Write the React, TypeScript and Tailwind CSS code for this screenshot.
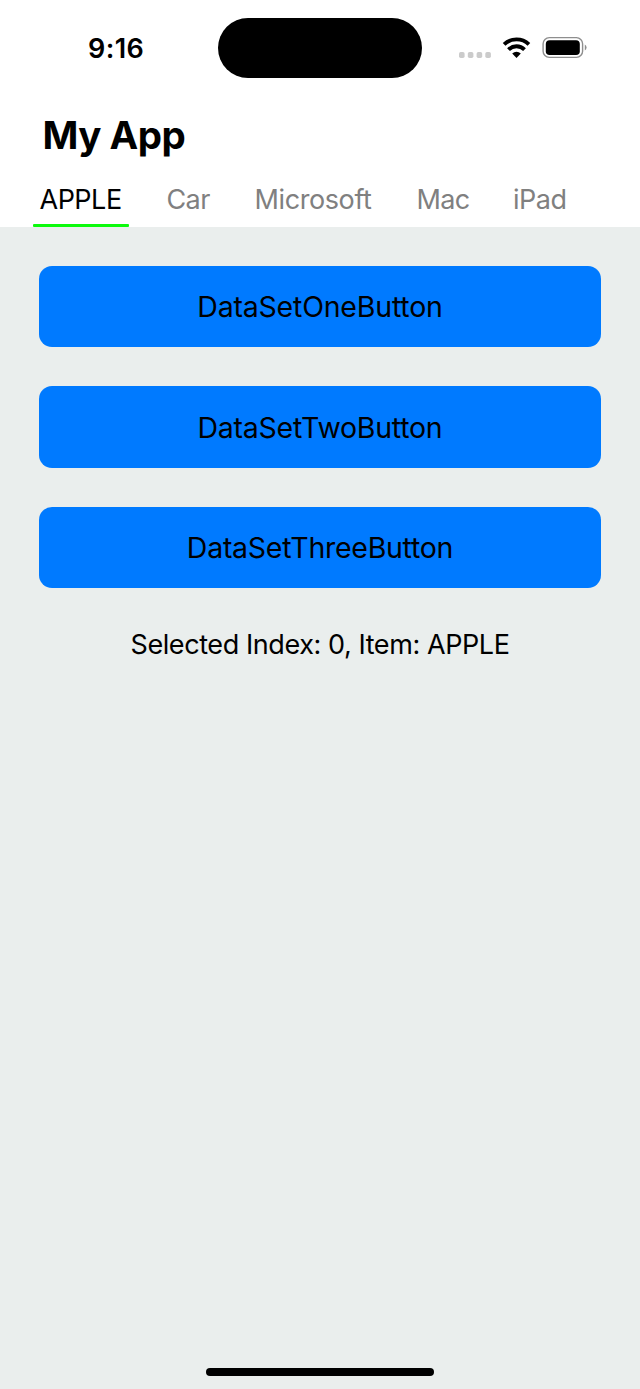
import { useState } from "react";

const tabs = [
  { label: "APPLE", width: "w-[127px]", tracking: "tracking-[-0.5px]" },
  { label: "Car", width: "w-[88px]", tracking: "tracking-[-0.6px]" },
  { label: "Microsoft", width: "w-[162px]", tracking: "tracking-[-0.4px]" },
  { label: "Mac", width: "w-[96.5px]", tracking: "tracking-[-0.7px]" },
  { label: "iPad", width: "w-[60px]", tracking: "tracking-[-0.5px]" },
];

const buttons = [
  { label: "DataSetOneButton", tracking: "tracking-[-0.2px]" },
  { label: "DataSetTwoButton", tracking: "tracking-[-0.25px]" },
  { label: "DataSetThreeButton", tracking: "tracking-[-0.27px]" },
];

function StatusBar() {
  return (
    <div className="flex h-[96px] shrink-0 items-start">
      <div className="w-[218px] pt-[32.5px] pl-[88px] text-[27px] leading-[32px] font-semibold tracking-[0.4px]">
        9:16
      </div>
      <div className="mt-[18px] h-[60px] w-[204px] rounded-full bg-black" />
      <svg className="mt-[30px] ml-[28px] h-[36px] w-[150px]" viewBox="450 30 150 36" fill="none">
        <g fill="#cbcbcb">
          <rect x="459" y="52" width="5.6" height="6" rx="1.7" />
          <rect x="467.8" y="52" width="5.6" height="6" rx="1.7" />
          <rect x="476.6" y="52" width="5.6" height="6" rx="1.7" />
          <rect x="485.3" y="52" width="5.6" height="6" rx="1.7" />
        </g>
        <g stroke="#000" strokeWidth="3.9">
          <path d="M504.1 44.3a18 18 0 0 1 24.8 0" />
          <path d="M508.5 49.6a11.3 11.3 0 0 1 16 0" />
        </g>
        <path d="M512.2 53.5a6.2 6.2 0 0 1 8.6 0L516.5 57.9Z" fill="#000" />
        <rect x="543.1" y="37.6" width="39.5" height="19.8" rx="6.2" stroke="#8e8e8e" strokeWidth="1.4" />
        <rect x="545.8" y="40.2" width="34" height="14.8" rx="3.8" fill="#000" />
        <path d="M584.8 44.5a3.4 3.4 0 0 1 0 6Z" fill="#8e8e8e" />
      </svg>
    </div>
  );
}

export default function App() {
  const [selected, setSelected] = useState(0);

  return (
    <div className="flex h-[1389px] w-[640px] flex-col overflow-hidden bg-[#eaeeed] font-['Inter',sans-serif] text-black">
      <header className="flex h-[227px] shrink-0 flex-col bg-white">
        <StatusBar />
        <h1 className="mt-[15px] ml-[42.5px] h-[62px] text-[38.5px] leading-[48px] font-bold tracking-[-0.5px]">
          My App
        </h1>
        <nav className="flex h-[54px] pl-[39.5px]">
          {tabs.map((tab, index) => (
            <button
              key={tab.label}
              onClick={() => setSelected(index)}
              className={`flex shrink-0 items-start whitespace-nowrap text-[27px] leading-[54px] ${tab.width} ${tab.tracking} ${
                index === selected ? "text-black" : "text-[#808080]"
              }`}
            >
              <span className="relative block h-[54px]">
                {tab.label}
                {index === selected && (
                  <span className="absolute -right-[7px] bottom-0 -left-[6.5px] h-[3.5px] rounded-[1px] bg-[#0cfa0c]" />
                )}
              </span>
            </button>
          ))}
        </nav>
      </header>
      <main className="flex flex-1 flex-col px-[39px] pt-[39px]">
        <div className="flex flex-col gap-[39.2px]">
          {buttons.map((button) => (
            <button
              key={button.label}
              className={`h-[81.3px] rounded-[13px] bg-[#007aff] text-[28.5px] leading-[81px] ${button.tracking}`}
            >
              {button.label}
            </button>
          ))}
        </div>
        <p className="mt-[39px] text-center text-[27px] leading-[36px] tracking-[-0.42px]">
          Selected Index: {selected}, Item: {tabs[selected].label}
        </p>
      </main>
      <div className="mb-[13px] h-[8px] w-[228px] shrink-0 self-center rounded-full bg-black" />
    </div>
  );
}
